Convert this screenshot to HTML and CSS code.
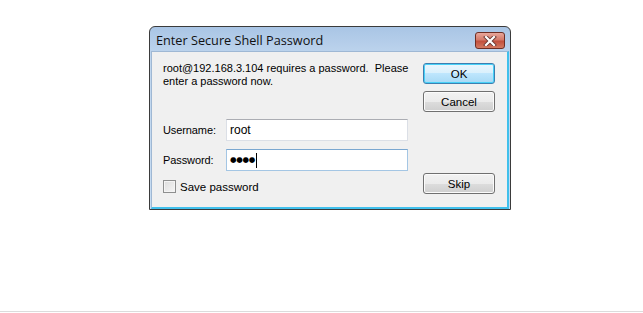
FILE: index.html
```html
<!DOCTYPE html>
<html>
<head>
<meta charset="utf-8">
<link rel="stylesheet" href="styles.css">
</head>
<body>
<div class="page">
  <div class="dialog">
    <div class="titlebar">
      <span class="title">Enter Secure Shell Password</span>
      <button class="close" aria-label="Close">
        <svg width="14" height="10" viewBox="0 0 14 10">
          <path d="M3 1 L11 9 M11 1 L3 9" stroke="#6b3a34" stroke-width="4" stroke-linecap="square" fill="none"/>
          <path d="M3 1 L11 9 M11 1 L3 9" stroke="#ffffff" stroke-width="2.2" stroke-linecap="square" fill="none"/>
        </svg>
      </button>
    </div>
    <div class="client">
      <div class="main">
        <p class="message">root@192.168.3.104 requires a password.&nbsp; Please<br>enter a password now.</p>
        <div class="row first">
          <label class="label">Username:</label>
          <div class="input">root</div>
        </div>
        <div class="row">
          <label class="label">Password:</label>
          <div class="input focused"><span class="dots">●●●●</span><span class="caret"></span></div>
        </div>
        <div class="check-row">
          <span class="checkbox"></span>
          <span class="check-label">Save password</span>
        </div>
      </div>
      <div class="buttons">
        <button class="btn default">OK</button>
        <button class="btn">Cancel</button>
        <div class="spacer"></div>
        <button class="btn">Skip</button>
      </div>
    </div>
  </div>
</div>
</body>
</html>
```
FILE: styles.css
```css
html, body {
  margin: 0;
  padding: 0;
  background: #ffffff;
}
.page {
  height: 312px;
  border-bottom: 1px solid #dcdcdc;
  padding: 26px 0 0 149px;
  box-sizing: border-box;
}
.dialog {
  width: 362px;
  height: 184px;
  box-sizing: border-box;
  border: 1px solid #3b3b3b;
  border-radius: 6px 6px 0 0;
  background: linear-gradient(#a9c5e5, #c0d6ee 30px, #c7dcf2);
  display: flex;
  flex-direction: column;
}
.titlebar {
  height: 24px;
  display: flex;
  align-items: center;
  justify-content: space-between;
  padding: 0 5px 0 6px;
}
.title {
  font-family: "Open Sans", "Noto Sans", sans-serif;
  font-size: 12.7px;
  color: #111;
  margin-top: 1px;
}
.close {
  width: 30px;
  height: 17px;
  margin-top: 3px;
  border: 1px solid #6e2e24;
  border-radius: 3px;
  background: linear-gradient(#e8a79b, #d47a6a 45%, #c2503d 55%, #d37a62);
  display: flex;
  align-items: center;
  justify-content: center;
  padding: 0;
}
.client {
  flex: 1;
  margin: 0 1px 0 1px;
  background: #f0f0f0;
  border: 1px solid #9fb8d4;
  border-right: 2px solid #40c0ec;
  border-bottom: 2px solid #40c0ec;
  display: flex;
  padding: 10px 12px 12px 11px;
  font-family: "Liberation Sans", Arial, sans-serif;
  font-size: 11px;
  color: #000;
}
.main {
  flex: 1;
}
.message {
  margin: 0;
  line-height: 13px;
}
.row {
  display: flex;
  align-items: center;
  margin-top: 8px;
}
.row.first {
  margin-top: 31px;
}
.label {
  width: 63px;
  letter-spacing: -0.1px;
}
.input {
  width: 182px;
  height: 22px;
  box-sizing: border-box;
  background: #fff;
  border: 1px solid #dbdfe6;
  border-top-color: #abadb3;
  padding: 2px 3px;
  font-size: 12px;
  line-height: 16px;
  display: flex;
  align-items: center;
}
.input.focused {
  border-color: #a4c6e4;
  border-top-color: #7aa7d0;
}
.dots {
  font-family: "DejaVu Sans", sans-serif;
  font-size: 7.5px;
  letter-spacing: -0.3px;
}
.caret {
  display: inline-block;
  width: 1px;
  height: 15px;
  background: #000;
  margin-left: 1px;
}
.check-row {
  display: flex;
  align-items: center;
  margin-top: 9px;
}
.checkbox {
  width: 11px;
  height: 11px;
  border: 1px solid #8e8f8f;
  background: linear-gradient(135deg, #dcdcdc, #f6f6f6);
  box-shadow: inset 0 0 0 1px #f4f4f4;
  margin-right: 4px;
}
.check-label {
  font-size: 11.5px;
}
.buttons {
  width: 72px;
  display: flex;
  flex-direction: column;
  padding-top: 1px;
}
.spacer {
  flex: 1;
}
.btn {
  width: 72px;
  height: 21px;
  margin-bottom: 7px;
  border: 1px solid #707070;
  border-radius: 3px;
  background: linear-gradient(#f2f2f2 0%, #ebebeb 50%, #dddddd 50%, #cfcfcf 100%);
  box-shadow: inset 0 0 0 1px #fbfbfb;
  font-family: "Liberation Sans", Arial, sans-serif;
  font-size: 11.5px;
  color: #000;
  padding: 0;
}
.btn:last-child {
  margin-bottom: 1px;
}
.btn.default {
  border-color: #3c7fb1;
  background: linear-gradient(#eaf6fd 0%, #d9f0fc 50%, #bee6fd 50%, #a7d9f5 100%);
  box-shadow: inset 0 0 0 1px #48d1f7;
}
```
